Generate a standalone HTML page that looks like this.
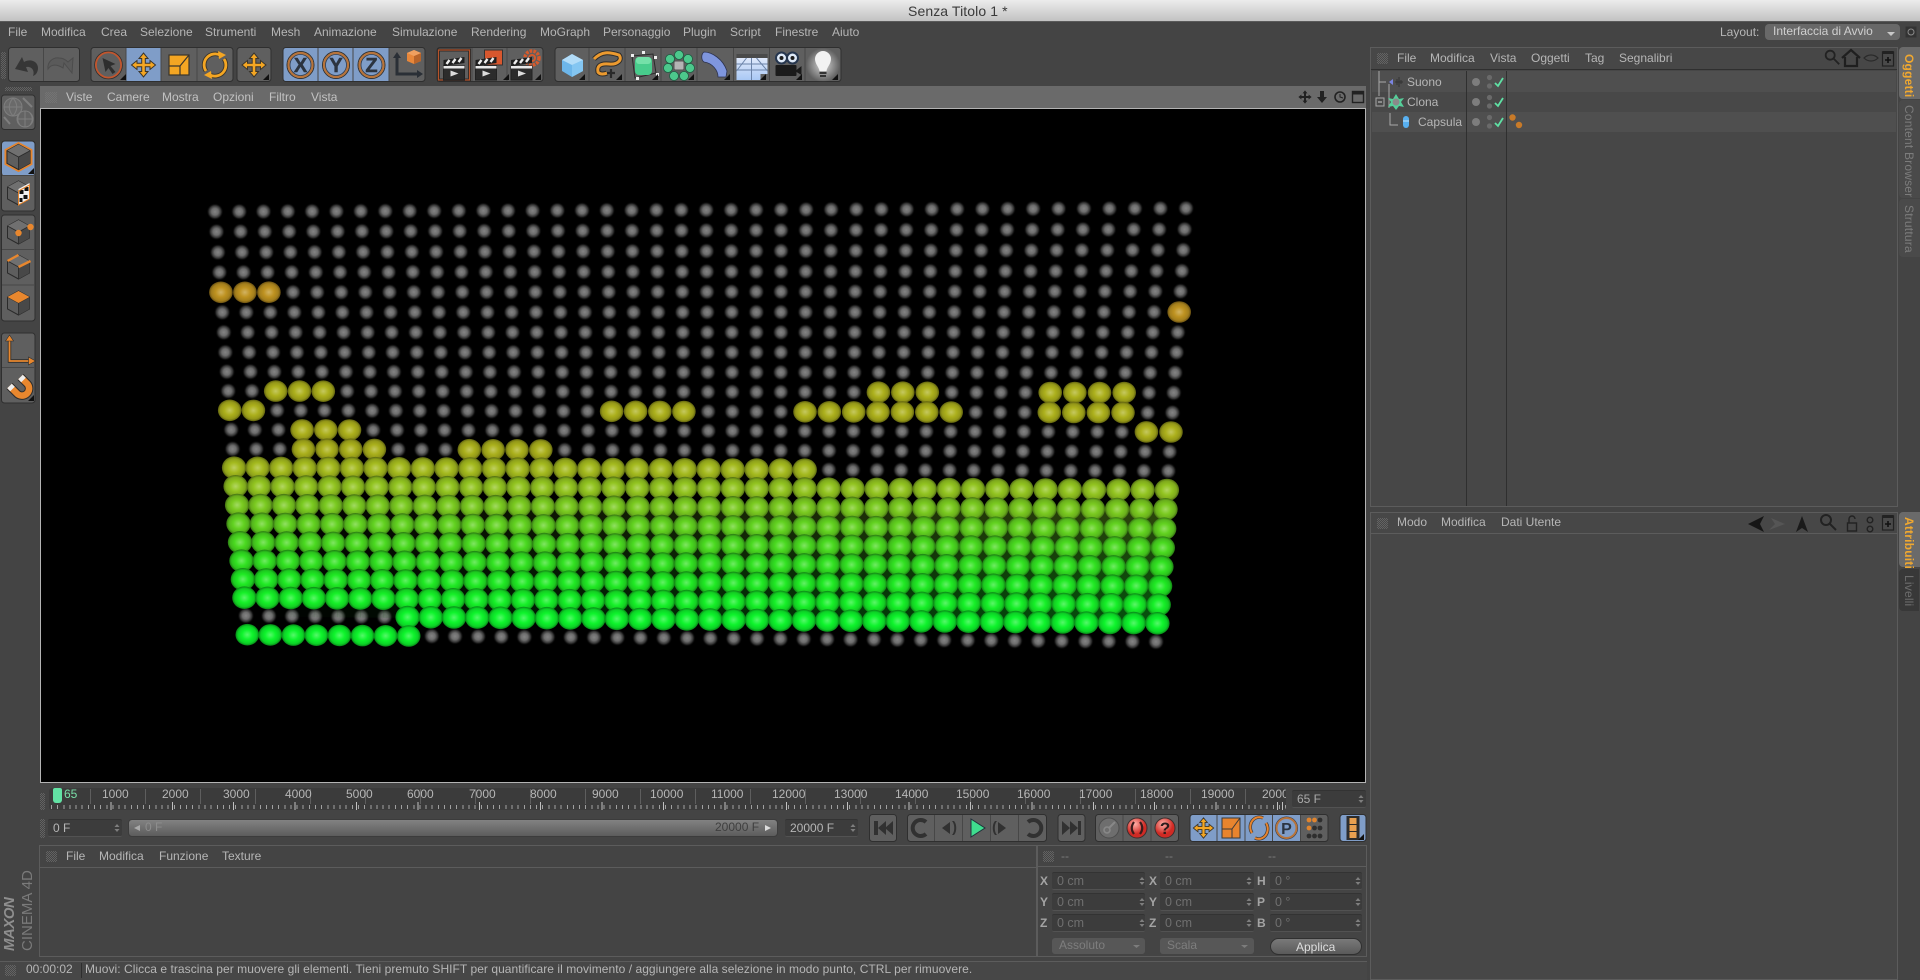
<!DOCTYPE html>
<html><head><meta charset="utf-8"><title>Senza Titolo 1 *</title>
<style>
html,body{margin:0;padding:0;width:1920px;height:980px;overflow:hidden;background:#444;font-family:"Liberation Sans",sans-serif}
div,span{position:absolute;box-sizing:border-box}
.t{white-space:nowrap;font:12px/14px "Liberation Sans",sans-serif;color:#b6b6b6}
.d{color:#c2c2c2}
.g{background:repeating-conic-gradient(#7c7c7c 0 25%,transparent 0 50%) 0 0/2px 2px;opacity:.55}
.p{background:#474747;border:1px solid #5c5c5c}
.f{background:#3c3c3c;border-top:1px solid #333;border-bottom:1px solid #525252;border-radius:2px}
.o{color:#6f6f6f;font-size:12.5px}
.l{font-weight:bold;color:#a4a4a4}
.v{writing-mode:vertical-rl;font:bold 12px/14px "Liberation Sans",sans-serif;white-space:nowrap;letter-spacing:.2px}
svg{position:absolute;left:0;top:0}
</style></head><body>
<div style="left:0;top:0;width:1920px;height:22px;background:linear-gradient(#ececec,#c2c2c2);border-bottom:1px solid #5a5a5a"></div>
<div class="t" style="left:908px;top:3px;font-size:14px;line-height:16px;color:#3a3a3a;letter-spacing:.1px">Senza Titolo 1 *</div>

<div class="t" style="left:8px;top:25px">File</div>
<div class="t" style="left:41px;top:25px">Modifica</div>
<div class="t" style="left:101px;top:25px">Crea</div>
<div class="t" style="left:140px;top:25px">Selezione</div>
<div class="t" style="left:205px;top:25px">Strumenti</div>
<div class="t" style="left:271px;top:25px">Mesh</div>
<div class="t" style="left:314px;top:25px">Animazione</div>
<div class="t" style="left:392px;top:25px">Simulazione</div>
<div class="t" style="left:471px;top:25px">Rendering</div>
<div class="t" style="left:540px;top:25px">MoGraph</div>
<div class="t" style="left:603px;top:25px">Personaggio</div>
<div class="t" style="left:683px;top:25px">Plugin</div>
<div class="t" style="left:730px;top:25px">Script</div>
<div class="t" style="left:775px;top:25px">Finestre</div>
<div class="t" style="left:832px;top:25px">Aiuto</div>
<div class="t" style="left:1720px;top:25px">Layout:</div>
<div style="left:1765px;top:24px;width:135px;height:16px;background:#686868;border-radius:4px"></div>
<div class="t" style="left:1773px;top:24px;color:#cfcfcf">Interfaccia di Avvio</div>

<div class="g" style="left:1px;top:52px;width:5px;height:27px"></div>
<div class="g" style="left:5px;top:87px;width:27px;height:4px"></div>
<div style="left:40px;top:86px;width:1326px;height:23px;background:#6a6a6a"></div>
<div class="g" style="left:45px;top:92px;width:12px;height:11px"></div>
<div class="t d" style="left:66px;top:90px">Viste</div>
<div class="t d" style="left:107px;top:90px">Camere</div>
<div class="t d" style="left:162px;top:90px">Mostra</div>
<div class="t d" style="left:213px;top:90px">Opzioni</div>
<div class="t d" style="left:269px;top:90px">Filtro</div>
<div class="t d" style="left:311px;top:90px">Vista</div>
<div style="left:40px;top:108px;width:1326px;height:675px;background:#000;border:1px solid #b4b4b4"></div>

<div class="g" style="left:40px;top:793px;width:5px;height:17px"></div>
<div style="left:49px;top:788px;width:1237px;height:22px;background:#3b3b3b;border-radius:3px;overflow:hidden">
<div style="left:0;top:1px;width:1237px;height:15px;background:repeating-linear-gradient(90deg,transparent 0 41px,#5e5e5e 41px 42px,transparent 42px 55px)"></div>
<div style="left:2px;top:17px;width:1235px;height:4px;background:repeating-linear-gradient(90deg,#a0a0a0 0 1px,transparent 1px 6.14px)"></div>
<div style="left:4px;top:14px;width:1233px;height:8px;background:repeating-linear-gradient(90deg,#c0c0c0 0 1px,transparent 1px 61.4px);background-position:-4px 0"></div>
<div class="t" style="left:15px;top:-1px;color:#7adfa8">65</div>
<div class="t" style="left:53px;top:-1px">1000</div>
<div class="t" style="left:113px;top:-1px">2000</div>
<div class="t" style="left:174px;top:-1px">3000</div>
<div class="t" style="left:236px;top:-1px">4000</div>
<div class="t" style="left:297px;top:-1px">5000</div>
<div class="t" style="left:358px;top:-1px">6000</div>
<div class="t" style="left:420px;top:-1px">7000</div>
<div class="t" style="left:481px;top:-1px">8000</div>
<div class="t" style="left:543px;top:-1px">9000</div>
<div class="t" style="left:601px;top:-1px">10000</div>
<div class="t" style="left:662px;top:-1px">11000</div>
<div class="t" style="left:723px;top:-1px">12000</div>
<div class="t" style="left:785px;top:-1px">13000</div>
<div class="t" style="left:846px;top:-1px">14000</div>
<div class="t" style="left:907px;top:-1px">15000</div>
<div class="t" style="left:968px;top:-1px">16000</div>
<div class="t" style="left:1030px;top:-1px">17000</div>
<div class="t" style="left:1091px;top:-1px">18000</div>
<div class="t" style="left:1152px;top:-1px">19000</div>
<div class="t" style="left:1213px;top:-1px">20000</div>
</div>
<div style="left:53px;top:788px;width:9px;height:15px;background:#62e2a4;border-radius:2px 2px 3px 3px"></div>
<div class="f" style="left:1292px;top:790px;width:74px;height:18px"></div>
<div class="t" style="left:1297px;top:792px;color:#aaa">65 F</div>

<div class="g" style="left:40px;top:819px;width:5px;height:19px"></div>
<div class="f" style="left:48px;top:819px;width:74px;height:18px"></div>
<div class="t" style="left:53px;top:821px">0 F</div>
<div style="left:128px;top:819px;width:650px;height:18px;background:linear-gradient(#828282,#5c5c5c);border:1px solid #3c3c3c;border-radius:4px"></div>
<div class="t" style="left:145px;top:820px;color:#8d8d8d">0 F</div>
<div class="t" style="left:715px;top:820px;color:#3f3f3f">20000 F</div>
<div class="f" style="left:785px;top:819px;width:73px;height:18px"></div>
<div class="t" style="left:790px;top:821px">20000 F</div>

<div class="p" style="left:39px;top:845px;width:998px;height:112px;background:#444"></div>
<div style="left:40px;top:867px;width:996px;height:1px;background:#5c5c5c"></div>
<div class="g" style="left:46px;top:851px;width:11px;height:11px"></div>
<div class="t" style="left:66px;top:849px">File</div>
<div class="t" style="left:99px;top:849px">Modifica</div>
<div class="t" style="left:159px;top:849px">Funzione</div>
<div class="t" style="left:222px;top:849px">Texture</div>

<div class="p" style="left:1037px;top:845px;width:330px;height:112px;background:#444"></div>
<div style="left:1038px;top:866px;width:328px;height:1px;background:#5c5c5c"></div>
<div class="g" style="left:1043px;top:851px;width:11px;height:11px"></div>
<div class="t" style="left:1061px;top:849px;color:#7c7c7c">--</div>
<div class="t" style="left:1165px;top:849px;color:#7c7c7c">--</div>
<div class="t" style="left:1268px;top:849px;color:#7c7c7c">--</div>
<div class="f" style="left:1052px;top:872px;width:93px;height:18px"></div>
<div class="f" style="left:1160px;top:872px;width:94px;height:18px"></div>
<div class="f" style="left:1270px;top:872px;width:92px;height:18px"></div>
<div class="f" style="left:1052px;top:893px;width:93px;height:18px"></div>
<div class="f" style="left:1160px;top:893px;width:94px;height:18px"></div>
<div class="f" style="left:1270px;top:893px;width:92px;height:18px"></div>
<div class="f" style="left:1052px;top:914px;width:93px;height:18px"></div>
<div class="f" style="left:1160px;top:914px;width:94px;height:18px"></div>
<div class="f" style="left:1270px;top:914px;width:92px;height:18px"></div>
<div class="t l" style="left:1040px;top:874px">X</div><div class="t o" style="left:1057px;top:874px">0 cm</div>
<div class="t l" style="left:1149px;top:874px">X</div><div class="t o" style="left:1165px;top:874px">0 cm</div>
<div class="t l" style="left:1257px;top:874px">H</div><div class="t o" style="left:1275px;top:874px">0 °</div>
<div class="t l" style="left:1040px;top:895px">Y</div><div class="t o" style="left:1057px;top:895px">0 cm</div>
<div class="t l" style="left:1149px;top:895px">Y</div><div class="t o" style="left:1165px;top:895px">0 cm</div>
<div class="t l" style="left:1257px;top:895px">P</div><div class="t o" style="left:1275px;top:895px">0 °</div>
<div class="t l" style="left:1040px;top:916px">Z</div><div class="t o" style="left:1057px;top:916px">0 cm</div>
<div class="t l" style="left:1149px;top:916px">Z</div><div class="t o" style="left:1165px;top:916px">0 cm</div>
<div class="t l" style="left:1257px;top:916px">B</div><div class="t o" style="left:1275px;top:916px">0 °</div>
<div style="left:1052px;top:938px;width:93px;height:16px;background:#575757;border-radius:3px"></div>
<div class="t" style="left:1059px;top:938px;color:#7e7e7e">Assoluto</div>
<div style="left:1160px;top:938px;width:94px;height:16px;background:#575757;border-radius:3px"></div>
<div class="t" style="left:1167px;top:938px;color:#7e7e7e">Scala</div>
<div style="left:1270px;top:938px;width:92px;height:17px;background:linear-gradient(#797979,#5a5a5a);border:1px solid #303030;border-radius:9px"></div>
<div class="t" style="left:1296px;top:940px;color:#dedede">Applica</div>

<div style="left:0;top:961px;width:1367px;height:19px;background:#474747;border-top:1px solid #5c5c5c"></div>
<div class="g" style="left:5px;top:965px;width:11px;height:11px"></div>
<div class="t" style="left:26px;top:962px">00:00:02</div>
<div style="left:81px;top:963px;width:1px;height:15px;background:#2e2e2e"></div>
<div class="t" style="left:85px;top:962px;letter-spacing:.05px">Muovi: Clicca e trascina per muovere gli elementi. Tieni premuto SHIFT per quantificare il movimento / aggiungere alla selezione in modo punto, CTRL per rimuovere.</div>

<div class="t" style="left:-28px;top:907px;width:76px;height:12px;transform:rotate(-90deg);font:italic bold 15px/12px 'Liberation Sans',sans-serif;color:#8e8e8e;text-align:left;letter-spacing:-.5px">MAXON</div>
<div class="t" style="left:-12px;top:904px;width:80px;height:14px;transform:rotate(-90deg);font:15px/14px 'Liberation Sans',sans-serif;color:#7a7a7a">CINEMA 4D</div>

<div class="p" style="left:1370px;top:47px;width:528px;height:460px"></div>
<div style="left:1371px;top:69px;width:526px;height:1px;background:#2f2f2f"></div>
<div style="left:1372px;top:71px;width:524px;height:21px;background:#4f4f4f"></div>
<div style="left:1372px;top:92px;width:524px;height:20px;background:#484848"></div>
<div style="left:1372px;top:112px;width:524px;height:20px;background:#4f4f4f"></div>
<div style="left:1466px;top:71px;width:1px;height:435px;background:#2f2f2f"></div>
<div style="left:1506px;top:71px;width:1px;height:435px;background:#2f2f2f"></div>
<div class="g" style="left:1377px;top:53px;width:11px;height:11px"></div>
<div class="t" style="left:1397px;top:51px">File</div>
<div class="t" style="left:1430px;top:51px">Modifica</div>
<div class="t" style="left:1490px;top:51px">Vista</div>
<div class="t" style="left:1531px;top:51px">Oggetti</div>
<div class="t" style="left:1585px;top:51px">Tag</div>
<div class="t" style="left:1619px;top:51px">Segnalibri</div>
<div class="t" style="left:1407px;top:75px">Suono</div>
<div class="t" style="left:1407px;top:95px">Clona</div>
<div class="t" style="left:1418px;top:115px">Capsula</div>

<div class="p" style="left:1370px;top:512px;width:528px;height:468px"></div>
<div style="left:1371px;top:533px;width:526px;height:1px;background:#5c5c5c"></div>
<div class="g" style="left:1377px;top:518px;width:11px;height:11px"></div>
<div class="t" style="left:1397px;top:515px">Modo</div>
<div class="t" style="left:1441px;top:515px">Modifica</div>
<div class="t" style="left:1501px;top:515px">Dati Utente</div>

<div style="left:1899px;top:47px;width:21px;height:52px;background:#6a6a6a;border-radius:4px 0 0 4px"></div>
<div class="v" style="left:1902px;top:54px;color:#f0a830">Oggetti</div>
<div style="left:1899px;top:100px;width:21px;height:98px;background:#4a4a4a;border-radius:4px 0 0 4px"></div>
<div class="v" style="left:1902px;top:105px;color:#7c7c7c;font-weight:normal">Content Browser</div>
<div style="left:1899px;top:199px;width:21px;height:58px;background:#4a4a4a;border-radius:4px 0 0 4px"></div>
<div class="v" style="left:1902px;top:205px;color:#7c7c7c;font-weight:normal">Struttura</div>
<div style="left:1899px;top:512px;width:21px;height:55px;background:#6a6a6a;border-radius:4px 0 0 4px"></div>
<div class="v" style="left:1902px;top:517px;color:#f0a830">Attribuiti</div>
<div style="left:1899px;top:569px;width:20px;height:42px;background:#383838;border-radius:4px 0 0 4px"></div>
<div class="v" style="left:1902px;top:575px;color:#6c6c6c;font-weight:normal">Livelli</div>

<svg width="1920" height="980" viewBox="0 0 1920 980" xmlns="http://www.w3.org/2000/svg">
<defs>
<radialGradient id="gray"><stop offset="0" stop-color="#848484"/><stop offset=".4" stop-color="#6e6e6e"/><stop offset=".72" stop-color="#303030"/><stop offset="1" stop-color="#000" stop-opacity="0"/></radialGradient>
<radialGradient id="red" cx=".4" cy=".3"><stop offset="0" stop-color="#ffb0a8"/><stop offset="1" stop-color="#d02a24"/></radialGradient>
<radialGradient id="yel" cx=".4" cy=".3"><stop offset="0" stop-color="#ffe8a8"/><stop offset="1" stop-color="#d88a18"/></radialGradient>
<radialGradient id="grn" cx=".4" cy=".3"><stop offset="0" stop-color="#cfffc8"/><stop offset="1" stop-color="#38a828"/></radialGradient>
<radialGradient id="glow"><stop offset="0" stop-color="#fff" stop-opacity=".75"/><stop offset="1" stop-color="#fff" stop-opacity="0"/></radialGradient>
<linearGradient id="sky" x1="0" y1="0" x2="0" y2="1"><stop offset="0" stop-color="#dfe9fb"/><stop offset="1" stop-color="#a9c8f4"/></linearGradient>
<path id="tri" d="M0,6 L6,6 L6,0 Z" fill="#111"/>
<path id="spin" d="M-2.5,-1 L0,-4 L2.5,-1 Z M-2.5,1 L0,4 L2.5,1 Z" fill="#7e7e7e"/>
<path id="mv" d="M0,-12 L4.5,-6.5 L1.8,-6.5 L1.8,-1.8 L6.5,-1.8 L6.5,-4.5 L12,0 L6.5,4.5 L6.5,1.8 L1.8,1.8 L1.8,6.5 L4.5,6.5 L0,12 L-4.5,6.5 L-1.8,6.5 L-1.8,1.8 L-6.5,1.8 L-6.5,4.5 L-12,0 L-6.5,-4.5 L-6.5,-1.8 L-1.8,-1.8 L-1.8,-6.5 L-4.5,-6.5 Z" fill="#f4a623" stroke="#3a352c" stroke-width="1"/>
<path id="mvd" d="M0,-12 L4.5,-6.5 L1.8,-6.5 L1.8,-1.8 L6.5,-1.8 L6.5,-4.5 L12,0 L6.5,4.5 L6.5,1.8 L1.8,1.8 L1.8,6.5 L4.5,6.5 L0,12 L-4.5,6.5 L-1.8,6.5 L-1.8,1.8 L-6.5,1.8 L-6.5,4.5 L-12,0 L-6.5,-4.5 L-6.5,-1.8 L-1.8,-1.8 L-1.8,-6.5 L-4.5,-6.5 Z" fill="#222"/>
<g id="ring"><circle r="13.5" fill="none" stroke="#2f2f2f" stroke-width="1"/><circle r="12" fill="none" stroke="#b8743a" stroke-width="2.2"/><circle r="10.5" fill="none" stroke="#2f3a4c" stroke-width=".8"/></g>
<g id="cube"><path d="M0,-12 L11,-6 L11,6 L0,12 L-11,6 L-11,-6 Z" fill="#5e5e5e" stroke="#2a2a2a" stroke-width="1"/><path d="M0,0 L11,-6 L11,6 L0,12 Z" fill="#484848"/><path d="M0,-12 L11,-6 L0,0 L-11,-6 Z" fill="#707070"/><path d="M-11,-6 L0,0 L11,-6 M0,0 V12" fill="none" stroke="#2a2a2a" stroke-width=".8"/></g>
<g id="clap"><rect x="-11" y="-3" width="21" height="14" fill="#2c2c2c" stroke="#222"/><path d="M-11,-9 L10,-12 L10,-6 L-11,-3 Z" fill="#1e1e1e"/><path d="M-8,-5 L-5,-9 M-2,-6 L1,-10 M4,-7 L7,-11" stroke="#ededed" stroke-width="2.4"/><rect x="-11" y="-3" width="21" height="2.5" fill="#e8e8e8"/><path d="M-4,1.5 L4,4.5 L-4,7.5 Z" fill="#dcdcdc"/></g>
<path id="mag" d="M-2,-2 m-5,0 a5,5 0 1 0 10,0 a5,5 0 1 0 -10,0 M2,2 L8,8" fill="none" stroke="#222" stroke-width="2"/>
<g id="page"><rect x="-5.5" y="-7" width="11" height="14" fill="#4a4a4a" stroke="#222" stroke-width="1.2"/><rect x="-5.5" y="-8" width="11" height="3" fill="#222"/><path d="M-3,1 H3 M0,-2 V4" stroke="#111" stroke-width="1.6"/></g>
</defs>

<!-- toolbar groups -->
<g fill="#5f5f5f" stroke="#2f2f2f" stroke-width="1">
<rect x="8.5" y="47.5" width="71" height="34" rx="3"/>
<rect x="91" y="47.5" width="142" height="34" rx="3"/>
<rect x="237" y="47.5" width="34" height="34" rx="3"/>
<rect x="283" y="47.5" width="142" height="34" rx="3"/>
<rect x="437" y="47.5" width="106" height="34" rx="3"/>
<rect x="555" y="47.5" width="286" height="34" rx="3"/>
<rect x="1.5" y="95" width="33.5" height="34.5" rx="3"/>
<rect x="1.5" y="141" width="33.5" height="70" rx="3"/>
<rect x="1.5" y="215" width="33.5" height="106" rx="3"/>
<rect x="1.5" y="333" width="33.5" height="70" rx="3"/>
<rect x="869.5" y="814.5" width="27" height="27" rx="3"/>
<rect x="907.5" y="814.5" width="139" height="27" rx="3"/>
<rect x="1058" y="814.5" width="27" height="27" rx="3"/>
<rect x="1095.5" y="814.5" width="83" height="27" rx="3"/>
<rect x="1190" y="814.5" width="138" height="27" rx="3"/>
</g>
<g fill="#7f9dc8">
<rect x="126" y="48" width="35" height="33"/>
<path d="M286,48 H318 V81 H286 Q283.5,81 283.5,78 V51 Q283.5,48 286,48 Z"/>
<rect x="318" y="48" width="35" height="33"/><rect x="353" y="48" width="36" height="33"/>
<rect x="2" y="141.5" width="32.5" height="34" rx="3"/>
<path d="M1193,815 H1217 V841 H1193 Q1190.5,841 1190.5,838 V818 Q1190.5,815 1193,815 Z"/>
<rect x="1217" y="815" width="28" height="26"/><rect x="1245" y="815" width="27.5" height="26"/><rect x="1272.5" y="815" width="28" height="26"/>
<rect x="1340" y="814.5" width="26" height="27" rx="3" stroke="#2f2f2f"/>
</g>
<path stroke="#474747" stroke-width="1" fill="none" d="M43.5,48V81M126,48V81M161,48V81M197,48V81M318,48V81M353,48V81M389,48V81M472,48V81M507,48V81M589,48V81M625,48V81M661,48V81M697,48V81M733.5,48V81M769.5,48V81M805,48V81M2,175.5H35M2,249.5H35M2,285H35M2,367.5H35M934.5,815V841M962.5,815V841M990.5,815V841M1018.5,815V841M1123,815V841M1151,815V841M1217,815V841M1245,815V841M1272.5,815V841M1300.5,815V841"/>

<!-- undo / redo -->
<path transform="translate(26,65)" d="M-11,4 L-4,-8 L-2,-3 C5,-7 12,-3 12,3 C12,7 10,10 7,11 C9,6 6,1 0,2 L2,7 Z" fill="#363636"/>
<path transform="translate(61,65)" d="M11,8 L3,-2 L2,3 C-4,-1 -10,-1 -13,4 C-14,-3 -8,-8 -2,-7 C2,-7 5,-5 7,-3 L12,-7 Z" fill="#5a5a5a" stroke="#4c4c4c" stroke-width="1"/>
<!-- arrow tool -->
<g transform="translate(108.5,65)"><circle r="13.8" fill="none" stroke="#2f2f2f"/><circle r="12.6" fill="none" stroke="#c2562e" stroke-width="1.8"/><path d="M-6,-7 L7,-1 L2,1 L7,7 L4,9 L0,3 L-3,7 Z" fill="#2e2e2e"/></g>
<use href="#tri" x="120" y="74"/>
<use href="#mv" x="143.5" y="65"/>
<g transform="translate(179,65)"><rect x="-10" y="-10" width="20" height="20" fill="#f4a623" stroke="#3a352c" stroke-width="1.2"/><path d="M-10,1 H1 V10 M1,1 L10,-10" fill="none" stroke="#3a352c" stroke-width="1.2"/></g>
<g transform="translate(215,65)" fill="none"><path d="M-9,6 A11,11 0 0 1 5,-10 M9,-6 A11,11 0 0 1 -5,10" stroke="#3a352c" stroke-width="4.6"/><path d="M-9,6 A11,11 0 0 1 5,-10 M9,-6 A11,11 0 0 1 -5,10" stroke="#f4a623" stroke-width="2.8"/><path d="M3,-14 L11,-10 L4,-6 Z M-3,14 L-11,10 L-4,6 Z" fill="#f4a623"/></g>
<use href="#mv" x="254" y="65"/><use href="#tri" x="263" y="74"/>
<!-- XYZ -->
<g font-family="'Liberation Sans',sans-serif" font-weight="bold" font-size="20" text-anchor="middle" fill="#2c3440" stroke="#2c3440" stroke-width=".5">
<use href="#ring" x="300.5" y="65"/><text x="300.5" y="72">X</text>
<use href="#ring" x="336" y="65"/><text x="336" y="72">Y</text>
<use href="#ring" x="371.5" y="65"/><text x="371.5" y="72">Z</text>
</g>
<g transform="translate(407,65)"><path d="M-10,-9 V9 H11" fill="none" stroke="#2a2f36" stroke-width="3"/><path d="M-14,-7 L-10,-13 L-6,-7 Z M10,5 L16,9 L10,13 Z" fill="#2a2f36"/><path d="M7,-15 L14,-12 L14,-4 L7,-1 L0,-4 L0,-12 Z" fill="#e8873a"/><path d="M7,-9 L14,-12 L14,-4 L7,-1 Z" fill="#b8642a"/><path d="M0,-12 L7,-15 L14,-12 L7,-9 Z" fill="#f0a060"/></g>
<!-- render clappers -->
<g transform="translate(454.5,65)"><rect x="-16" y="-15" width="31" height="30" fill="none" stroke="#2b2b2b" stroke-width="3"/><rect x="-16" y="-15" width="31" height="30" fill="none" stroke="#b6532a" stroke-width="1.2"/><use href="#clap" y="4"/></g>
<g transform="translate(489.5,65)"><rect x="-5" y="-15" width="18" height="15" fill="#d8572e" stroke="#333"/><use href="#clap" x="-3" y="4"/></g>
<g transform="translate(525,65)"><circle cx="7" cy="-7" r="7" fill="none" stroke="#d65a2c" stroke-width="3.5" stroke-dasharray="2.6 1.2"/><circle cx="7" cy="-7" r="3" fill="none" stroke="#d65a2c" stroke-width="2"/><use href="#clap" x="-3" y="4"/></g>
<use href="#tri" x="503" y="74"/><use href="#tri" x="535" y="74"/>
<!-- object icons -->
<g transform="translate(572,65)"><path d="M0,-11 L11,-5 L11,6 L0,12 L-10,6 L-10,-5 Z" fill="#6db6ea"/><path d="M0,0 L11,-5 L11,6 L0,12 Z" fill="#84c6f2"/><path d="M-10,-5 L0,-11 L11,-5 L0,0 Z" fill="#b2dcf8"/></g>
<g transform="translate(607,65)" fill="none"><path d="M-13,-6 C-5,-14 2,-13 12,-10 C16,-5 10,0 2,-1 C-8,-2 -10,2 -9,7 C-7,10 -2,9 0,8" stroke="#2c2c2c" stroke-width="5"/><path d="M-13,-6 C-5,-14 2,-13 12,-10 C16,-5 10,0 2,-1 C-8,-2 -10,2 -9,7 C-7,10 -2,9 0,8" stroke="#ec9a2f" stroke-width="3"/><path d="M0,8 H8 M4,4 V13" stroke="#2a2a2a" stroke-width="2.2"/></g>
<g transform="translate(643,65)"><path d="M-11,-9 L10,-11 L13,8 L-8,13 Z" fill="none" stroke="#2a2a2a"/><rect x="-8" y="-8" width="17" height="18" rx="4" fill="#48cc8c"/><rect x="-7" y="-8" width="15" height="7" rx="3" fill="#74e0a8"/><g fill="#eee"><rect x="-12" y="-11" width="3" height="3"/><rect x="-1" y="-14" width="3" height="3"/><rect x="11" y="-9" width="3" height="3"/><rect x="-7" y="12" width="3" height="3"/><rect x="13" y="8" width="3" height="3"/></g></g>
<g transform="translate(679,65)"><g fill="#4cc88c" stroke="#1e5c42" stroke-width=".8"><circle cx="0" cy="-10" r="4.5"/><circle cx="9" cy="-6" r="4.5"/><circle cx="11" cy="3" r="4.5"/><circle cx="5" cy="11" r="4.5"/><circle cx="-5" cy="11" r="4.5"/><circle cx="-11" cy="3" r="4.5"/><circle cx="-9" cy="-6" r="4.5"/></g><rect x="-5" y="-4" width="10" height="9" rx="1.5" fill="#b4b4b4" stroke="#555"/></g>
<g transform="translate(715,65)"><path d="M-11,-13 C-3,-13 8,-6 12,6 L11,12 L3,12 C3,5 -3,-2 -11,-3 C-14,-5 -14,-11 -11,-13 Z" fill="#7f96de" stroke="#2d3350" stroke-width=".8"/></g>
<g transform="translate(751.5,65)"><rect x="-15" y="-11" width="31" height="5" fill="#4a4a4a"/><rect x="-15" y="-7" width="31" height="22" fill="url(#sky)"/><path d="M-15,-1 H16 M-15,5 H16 M0,-7 V15 M-5,-7 L-15,6 M5,-7 L16,6" stroke="#6b83a8" stroke-width="1" fill="none"/><rect x="9" y="9" width="7" height="6" fill="#5f5f5f"/></g>
<g transform="translate(787.5,65)"><circle cx="-6" cy="-7" r="5.5" fill="#dfeaf8" stroke="#26364e" stroke-width="2"/><circle cx="5" cy="-7" r="5.5" fill="#dfeaf8" stroke="#26364e" stroke-width="2"/><circle cx="-6" cy="-7" r="2" fill="#1c1c1c"/><circle cx="5" cy="-7" r="2" fill="#1c1c1c"/><rect x="-12" y="0" width="21" height="11" rx="1" fill="#1b1b1b"/><path d="M9,5 L14,1 V10 L9,7 Z" fill="#1b1b1b"/></g>
<g transform="translate(823,65)"><circle r="17" fill="url(#glow)"/><path d="M-8,-6 A8,8 0 1 1 8,-6 C8,-1 4,2 3.5,6 H-3.5 C-4,2 -8,-1 -8,-6 Z" fill="#f2f2f2"/><rect x="-3.5" y="7" width="7" height="2" fill="#333"/><rect x="-3" y="10" width="6" height="2" fill="#333"/></g>
<g><use href="#tri" x="579" y="74"/><use href="#tri" x="616" y="74"/><use href="#tri" x="652" y="74"/><use href="#tri" x="688" y="74"/><use href="#tri" x="724" y="74"/><use href="#tri" x="760" y="74"/><use href="#tri" x="796" y="74"/><use href="#tri" x="832" y="74"/></g>

<!-- left palette -->
<g transform="translate(18,112)" fill="none" stroke="#7e7e7e"><circle cx="-5" cy="-5" r="9" fill="#6a6a6a"/><path d="M-14,-5 H4 M-5,-14 C-10,-8 -10,-2 -5,4 M-5,-14 C0,-8 0,-2 -5,4"/><circle cx="7" cy="7" r="8" fill="#646464"/><path d="M-1,7 H15 M7,-1 V15 M2,1 C-1,5 -1,9 2,13 M12,1 C15,5 15,9 12,13"/><path d="M5,-14 L14,-5 M-14,5 L-8,12" stroke-width="2"/></g>
<g transform="translate(18.5,157)"><path d="M0,-14 L13,-7 L13,7 L0,14 L-13,7 L-13,-7 Z" fill="none" stroke="#e5852e" stroke-width="2"/><use href="#cube" transform="scale(1.05)"/></g>
<use href="#tri" x="28" y="168"/>
<g transform="translate(18.5,193)"><use href="#cube"/><path d="M0,-4 L11,-10 V6 L0,12 Z" fill="#f0f0f0"/><g fill="#111"><rect x="1" y="-3" width="4" height="4"/><rect x="6" y="-6" width="4" height="4"/><rect x="5" y="2" width="4" height="4"/><rect x="1" y="5" width="3" height="4"/></g><path d="M0,-2 L11,-8 V6 L0,12 Z" fill="none" stroke="#e5852e" stroke-width="1"/></g>
<g transform="translate(18.5,232)"><use href="#cube"/><circle cx="0" cy="1" r="3.2" fill="#e8872e"/><circle cx="12" cy="-5" r="3.2" fill="#e8872e"/></g>
<g transform="translate(18.5,267)"><use href="#cube"/><path d="M-11,-6 L0,-12 M0,0 L12,-6" stroke="#e8872e" stroke-width="2.4"/></g>
<g transform="translate(18.5,303)"><use href="#cube"/><path d="M0,-12 L11,-6 L0,0 L-11,-6 Z" fill="#e8872e"/></g>
<g transform="translate(18.5,350)" fill="none"><path d="M-9,-10 V11 H12" stroke="#2c2c2c" stroke-width="3.4"/><path d="M-9,-10 V11 H12" stroke="#e8872e" stroke-width="1.8"/><path d="M-13,-9 L-9,-15 L-5,-9 Z M10,7 L17,11 L10,15 Z" fill="#e8872e" stroke="#2c2c2c" stroke-width=".6"/></g>
<g transform="translate(18.5,385)" fill="none"><path d="M-9,1 L-2,8 A7,7 0 0 0 9,-1 L2,-8" stroke="#2c2c2c" stroke-width="8.5"/><path d="M-9,1 L-2,8 A7,7 0 0 0 9,-1 L2,-8" stroke="#e8872e" stroke-width="6.5"/><path d="M-9,1 L-6,4 M2,-8 L5,-5" stroke="#eee" stroke-width="6.5"/></g>
<use href="#tri" x="28" y="395"/>

<!-- timeline / transport icons -->
<use href="#spin" x="1361" y="799"/><use href="#spin" x="117" y="828"/><use href="#spin" x="853" y="828"/>
<path d="M134,828 L140,825 V831 Z" fill="#aaa"/><path d="M771,828 L765,825 V831 Z" fill="#ddd"/>
<g fill="#313131">
<path d="M874,821 H878 V835 H874 Z M878,828 L886,821 V835 Z M885,828 L893,821 V835 Z"/>
<path d="M942,828 L950,822 V834 Z M952,821 C955,824 955,832 952,835 L954,835 C957,832 957,824 954,821 Z"/>
<path d="M997,821 C994,824 994,832 997,835 L995,835 C992,832 992,824 995,821 Z M998,822 L1006,828 L998,834 Z"/>
<path d="M1062,821 L1070,828 V821 L1078,828 V821 H1081 V835 H1078 V828 L1070,835 V828 L1062,835 Z"/>
</g>
<path d="M926,822 A8,8 0 1 0 926,834 M1028,822 A8,8 0 1 1 1028,834" fill="none" stroke="#313131" stroke-width="4"/>
<path d="M971,819 L985,828 L971,837 Z" fill="#3fdc8e" stroke="#20303a" stroke-width="1"/>
<g transform="translate(1109,828)"><circle r="10" fill="#6e6e6e" stroke="#4c4c4c"/><circle cx="-2" cy="2" r="3" fill="none" stroke="#888" stroke-width="1.6"/><path d="M0,0 L6,-6" stroke="#888" stroke-width="2"/></g>
<g transform="translate(1137,828)"><circle r="10" fill="url(#red)" stroke="#3c3030"/><path d="M-3,-6 C-6,-2 -6,2 -3,6 M3,-6 C6,-2 6,2 3,6" fill="none" stroke="#3a1c1c" stroke-width="2.2"/></g>
<g transform="translate(1165,828)"><circle r="10" fill="url(#red)" stroke="#3c3030"/><text x="0" y="6" text-anchor="middle" font-family="'Liberation Sans',sans-serif" font-weight="bold" font-size="17" fill="#2c1c1c">?</text></g>
<use href="#mv" transform="translate(1203.5,828) scale(.85)"/>
<g transform="translate(1231,828)"><rect x="-9" y="-10" width="18" height="20" fill="#e8842e" stroke="#3a3a3a"/><path d="M-9,1 H1 V10 M1,1 L9,-10" fill="none" stroke="#3a3a3a"/></g>
<g transform="translate(1259,828)" fill="none"><path d="M-7,5 A9,10 0 0 1 4,-10 M7,-5 A9,10 0 0 1 -4,10" stroke="#3a3a3a" stroke-width="3.4"/><path d="M-7,5 A9,10 0 0 1 4,-10 M7,-5 A9,10 0 0 1 -4,10" stroke="#e8842e" stroke-width="2"/></g>
<g transform="translate(1286.5,828)"><circle r="11" fill="none" stroke="#2f3a4c"/><circle r="10" fill="none" stroke="#b8743a" stroke-width="2"/><text y="6" text-anchor="middle" font-family="'Liberation Sans',sans-serif" font-weight="bold" font-size="16" fill="#2c3440">P</text></g>
<g fill="#2e2e2e"><circle cx="1309" cy="820" r="2.4" fill="#e0842e"/><circle cx="1314.5" cy="820" r="2.4" fill="#e0842e"/><circle cx="1320" cy="820" r="2.4"/><circle cx="1309" cy="828" r="2.4" fill="#e0842e"/><circle cx="1314.5" cy="828" r="2.4"/><circle cx="1320" cy="828" r="2.4"/><circle cx="1309" cy="836" r="2.4"/><circle cx="1314.5" cy="836" r="2.4"/><circle cx="1320" cy="836" r="2.4"/></g>
<g transform="translate(1353,828)"><rect x="-6.5" y="-12" width="13" height="24" fill="#2c2c2c"/><rect x="-3.5" y="-10" width="7" height="6" fill="#e8a050"/><rect x="-3.5" y="-3" width="7" height="6" fill="#e8a050"/><rect x="-3.5" y="4" width="7" height="6" fill="#e8a050"/></g>
<use href="#tri" x="1358" y="834"/>
<!-- coordinate spinners and dropdown arrows -->
<g><use href="#spin" x="1142" y="881"/><use href="#spin" x="1249" y="881"/><use href="#spin" x="1358" y="881"/><use href="#spin" x="1142" y="902"/><use href="#spin" x="1249" y="902"/><use href="#spin" x="1358" y="902"/><use href="#spin" x="1142" y="923"/><use href="#spin" x="1249" y="923"/><use href="#spin" x="1358" y="923"/></g>
<path d="M1133,945 h7 l-3.5,3 Z M1241,945 h7 l-3.5,3 Z" fill="#7c7c7c"/>
<path d="M1887,32 h8 l-4,4 Z" fill="#c8c8c8"/>
<g transform="translate(1911,32)"><rect x="-5.5" y="-5.5" width="11" height="11" fill="#333"/><circle r="3" fill="none" stroke="#8a8a8a"/></g>
<!-- viewport header icons -->
<use href="#mvd" transform="translate(1305,97) scale(.55)"/>
<path d="M1320,91 h4 v6 h3 l-5,6 l-5,-6 h3 Z" fill="#222"/>
<g transform="translate(1340,97)"><circle r="5" fill="none" stroke="#222" stroke-width="1.6"/><path d="M0,-3 V0 L3,1" stroke="#222" fill="none"/></g>
<g transform="translate(1358,97)"><rect x="-5.5" y="-5.5" width="11" height="11" fill="none" stroke="#222" stroke-width="1.4"/><rect x="-5.5" y="-5.5" width="11" height="3" fill="#222"/></g>
<!-- object manager icons -->
<g transform="translate(1832,57) scale(.9)"><use href="#mag"/></g>
<path d="M1842,58 L1851,50 L1860,58 M1845,57 V66 H1857 V57" fill="none" stroke="#1f1f1f" stroke-width="2.2"/>
<path d="M1864,58 C1868,54 1874,54 1878,58 C1874,62 1868,62 1864,58 Z" fill="none" stroke="#2a2a2a" stroke-width="1.2"/>
<use href="#page" x="1888" y="59"/>
<path d="M1379,71 V96 M1379,82 H1386 M1389,84 V108 M1390,113 V125 H1398" fill="none" stroke="#a8a8a8" stroke-width="1"/>
<path d="M1389,82 L1393,79 V85 Z" fill="#7b84e0"/><path d="M1395,82 H1403 M1397,79 V85 M1399,77 V87 M1401,80 V84" stroke="#333" fill="none"/>
<g transform="translate(1380,102)"><rect x="-4" y="-4" width="8" height="8" fill="#4a4a4a" stroke="#a8a8a8"/><path d="M-2,0 H2" stroke="#ccc"/></g>
<g transform="translate(1396,102)"><path d="M0,-8 L3,-3 L8,-4 L5,0 L8,5 L3,4 L0,8 L-3,4 L-8,5 L-5,0 L-8,-4 L-3,-3 Z" fill="#55cf9a"/><circle r="3.5" fill="#8a8a8a"/></g>
<g transform="translate(1406,122)"><rect x="-3" y="-6" width="6" height="12" rx="3" fill="#58b0f0"/><path d="M-3,-1 H3" stroke="#c4e4fa"/></g>
<g fill="#7d7d7d"><circle cx="1476" cy="82" r="4"/><circle cx="1476" cy="102" r="4"/><circle cx="1476" cy="122" r="4"/>
<circle cx="1489.5" cy="77.5" r="2.6" fill="#6a6a6a"/><circle cx="1489.5" cy="86" r="2.6" fill="#6a6a6a"/><circle cx="1489.5" cy="97.5" r="2.6" fill="#6a6a6a"/><circle cx="1489.5" cy="106" r="2.6" fill="#6a6a6a"/><circle cx="1489.5" cy="117.5" r="2.6" fill="#6a6a6a"/><circle cx="1489.5" cy="126" r="2.6" fill="#6a6a6a"/></g>
<path d="M1495,83 L1498,86 L1503,78 M1495,103 L1498,106 L1503,98 M1495,123 L1498,126 L1503,118" fill="none" stroke="#5fe0a4" stroke-width="1.8"/>
<circle cx="1512.5" cy="117.5" r="3.2" fill="#c87a28"/><circle cx="1519" cy="125" r="3.2" fill="#c87a28"/>
<!-- attr icons -->
<path d="M1748,524 L1764,516 L1760,524 L1764,532 Z" fill="#161616"/>
<path d="M1785,524 L1769,530 L1775,524 L1771,518 Z" fill="#555"/>
<path d="M1802,516 L1808,532 L1802,528 L1796,532 Z" fill="#1a1a1a"/>
<g transform="translate(1828,522)"><use href="#mag"/></g>
<g transform="translate(1852,524)" fill="none" stroke="#222" stroke-width="1.4"><rect x="-4.5" y="-1" width="9" height="8"/><path d="M-3,-1 V-5 A3,3 0 0 1 3,-5"/></g>
<g fill="none" stroke="#222" stroke-width="1.4"><circle cx="1870" cy="520" r="2.8"/><circle cx="1870" cy="529" r="2.8"/></g>
<use href="#page" x="1888" y="523"/>

<g id="balls"></g>
</svg>
<script>
(function(){
var L=[211.7,231.7,252.3,272.3,292.3,312.3,332.3,352.3,371.7,391,410.3,429.7,449,467.7,486.3,505,523.7,542.3,560.7,579.3,597.7,615.7,634.7];
var R=[208.3,229.3,250,271,291.3,312,332.3,352.3,372.7,392.7,412.7,432,451.7,471,490,509.3,528.7,547.7,566.7,586,604.7,623.3,641.7];
var M={4:[[0,2]],5:[[39,39]],9:[[2,4],[27,29],[34,37]],10:[[0,1],[16,19],[24,30],[34,37]],11:[[3,5],[38,39]],12:[[3,6],[10,13]],13:[[0,24]],14:[[0,39]],15:[[0,39]],16:[[0,39]],17:[[0,39]],18:[[0,39]],19:[[0,39]],20:[[0,39]],21:[[7,39]],22:[[0,7]]};
var C={4:[190,146,32],5:[190,146,32],9:[172,176,28],10:[172,176,28],11:[172,176,28],12:[170,176,28],13:[164,186,30],14:[146,196,32],15:[122,202,32],16:[98,210,32],17:[74,218,32],18:[50,226,34],19:[32,234,36],20:[22,240,40],21:[14,244,44],22:[14,244,44]};
function rgb(a){return 'rgb('+a.map(Math.round).join(',')+')'}
var g='',h='',b='',r,c,s='',t;
for(r in C){var m=C[r],hi=m.map(function(v){return v+.3*(255-v)}),ed=m.map(function(v){return v*.55});
s+='<radialGradient id="b'+r+'"><stop offset="0" stop-color="'+rgb(hi)+'"/><stop offset=".45" stop-color="'+rgb(m)+'"/><stop offset=".8" stop-color="'+rgb(m.map(function(v){return v*.86}))+'"/><stop offset="1" stop-color="'+rgb(ed)+'"/></radialGradient>';}
for(r=0;r<23;r++){
 var x0=215+1.47*r,x1=1186-1.364*r,k=27.2-.705*r,rg=M[r]||[],blk=r>=13&&r<=21;
 for(c=0;c<40;c++){
  t=c/39;
  var x=x0+(x1-x0)*t+k*(t*t-t),y=L[r]+(R[r]-L[r])*t,col=false;
  for(var i=0;i<rg.length;i++)if(c>=rg[i][0]&&c<=rg[i][1])col=true;
  if(col){
   if(r>=15&&r<=20&&c<39)b+='<rect x="'+x.toFixed(1)+'" y="'+y.toFixed(1)+'" width="24" height="19" fill="'+rgb(C[r].map(function(v){return v*.36}))+'" fill-opacity="'+(t*.95).toFixed(2)+'"/>';
   h+='<ellipse cx="'+x.toFixed(1)+'" cy="'+y.toFixed(1)+'" rx="'+(blk?12.2:11.8)+'" ry="'+(blk?11.3:10.8)+'" fill="url(#b'+r+')"/>';
  }
  else g+='<circle cx="'+x.toFixed(1)+'" cy="'+y.toFixed(1)+'" r="8.5" fill="url(#gray)"/>';
 }
}
document.getElementById('balls').innerHTML='<defs>'+s+'</defs>'+g+b+h;
})();
</script>
</body></html>
